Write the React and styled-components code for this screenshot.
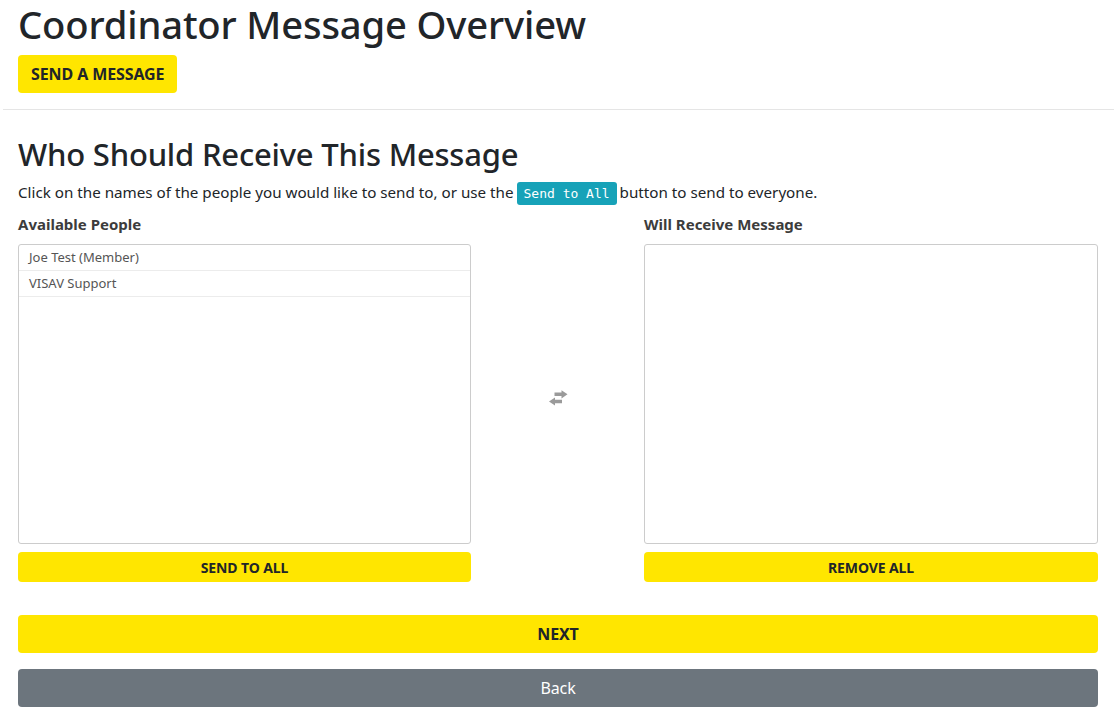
import React from "react";
import styled, { createGlobalStyle } from "styled-components";

const Global = createGlobalStyle`
  html, body { margin: 0; padding: 0; background: #fff; }
  body {
    font-family: "Noto Sans", "Open Sans", sans-serif;
    color: #212529;
    font-size: 16px;
    line-height: 1.5;
  }
  * { box-sizing: border-box; }
`;

const Page = styled.div`
  padding: 0 19px 12px 18px;
`;

const Header = styled.header`
  display: flex;
  flex-direction: column;
  align-items: flex-start;
`;

const Title = styled.h1`
  margin: 2px 0 7px;
  font-size: 38.2px;
  font-weight: 500;
  line-height: 1.2;
  letter-spacing: -0.15px;
`;

const Button = styled.button`
  display: flex;
  align-items: center;
  justify-content: center;
  width: ${(p) => (p.$block ? "100%" : "auto")};
  height: ${(p) => p.$h || 38}px;
  padding: 0 13px;
  border: none;
  border-radius: 4px;
  background: ${(p) => (p.$variant === "secondary" ? "#6c757d" : "#ffe600")};
  color: ${(p) => (p.$variant === "secondary" ? "#fff" : "#212529")};
  font-family: inherit;
  font-size: ${(p) => p.$fs || 16}px;
  font-weight: ${(p) => (p.$variant === "secondary" ? 400 : 700)};
  text-transform: ${(p) => (p.$variant === "secondary" ? "none" : "uppercase")};
  letter-spacing: -0.1px;
  cursor: pointer;
`;

const Rule = styled.hr`
  margin: 16px -16px 0 -15px;
  border: 0;
  border-top: 1px solid #e5e5e5;
`;

const Subtitle = styled.h2`
  margin: 26px 0 7px;
  font-size: 31px;
  font-weight: 500;
  line-height: 1.2;
  letter-spacing: -0.2px;
`;

const Lead = styled.p`
  margin: 0 0 4px;
  font-size: 15.2px;
  line-height: 24px;
`;

const Code = styled.code`
  display: inline-block;
  padding: 2px 7px 1px;
  margin: 0 3px;
  border-radius: 3px;
  background: #17a2b8;
  color: #fff;
  font-family: "DejaVu Sans Mono", "Liberation Mono", monospace;
  font-size: 13px;
  line-height: 20px;
  vertical-align: 0;
`;

const Columns = styled.div`
  display: grid;
  grid-template-columns: 453fr 173fr 454fr;
`;

const Column = styled.section`
  display: flex;
  flex-direction: column;
`;

const Label = styled.div`
  padding: 5px 0 10px;
  line-height: 20px;
  font-weight: 700;
  font-size: 15px;
  color: #3c3c3c;
`;

const ListBox = styled.ul`
  list-style: none;
  margin: 0 0 8px;
  padding: 0;
  height: 300px;
  border: 1px solid #cccccc;
  border-radius: 3px;
  overflow: hidden;
`;

const Item = styled.li`
  height: 26px;
  padding: 0 10px;
  display: flex;
  align-items: center;
  border-bottom: 1px solid #ececec;
  font-size: 13px;
  color: #555;
  cursor: pointer;
`;

const Middle = styled.div`
  display: flex;
  align-items: center;
  justify-content: center;
  padding-top: 34px;
  padding-bottom: 30px;
`;

const Footer = styled.div`
  display: flex;
  flex-direction: column;
  gap: 16px;
  margin-top: 33px;
`;

const TransferIcon = () => (
  <svg width="22" height="16" viewBox="0 0 22 16" aria-hidden="true">
    <path d="M7.5 2.6h7V0.2l6 4.1-6 4.1V6h-7z" fill="#9a9a9a" />
    <path d="M15 9.8H8V7.4l-6 4.1 6 4.1v-2.4h7z" fill="#9a9a9a" />
  </svg>
);

export default function App() {
  return (
    <Page>
      <Global />
      <Header>
        <Title>Coordinator Message Overview</Title>
        <Button $h={38}>Send a Message</Button>
      </Header>
      <Rule />
      <Subtitle>Who Should Receive This Message</Subtitle>
      <Lead>
        Click on the names of the people you would like to send to, or use the
        <Code>Send to All</Code>
        button to send to everyone.
      </Lead>
      <Columns>
        <Column>
          <Label>Available People</Label>
          <ListBox>
            <Item>Joe Test (Member)</Item>
            <Item>VISAV Support</Item>
          </ListBox>
          <Button $block $h={30} $fs={14}>Send to All</Button>
        </Column>
        <Middle>
          <TransferIcon />
        </Middle>
        <Column>
          <Label>Will Receive Message</Label>
          <ListBox />
          <Button $block $h={30} $fs={14}>Remove All</Button>
        </Column>
      </Columns>
      <Footer>
        <Button $block $h={38} $fs={16}>Next</Button>
        <Button $block $h={38} $fs={16} $variant="secondary">Back</Button>
      </Footer>
    </Page>
  );
}
